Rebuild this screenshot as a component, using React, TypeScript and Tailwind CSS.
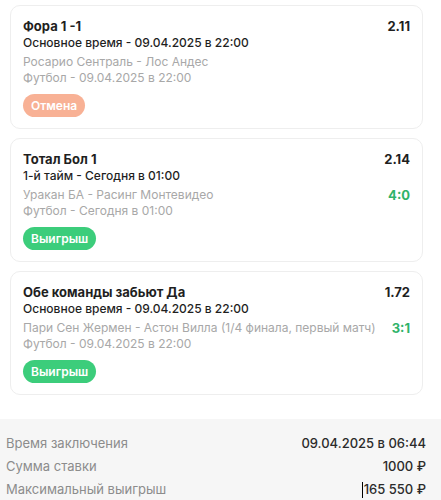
const bets = [
  {
    title: "Фора 1 -1",
    odds: "2.11",
    period: "Основное время - 09.04.2025 в 22:00",
    match: "Росарио Сентраль - Лос Андес",
    sport: "Футбол - 09.04.2025 в 22:00",
    score: "",
    status: "cancel",
  },
  {
    title: "Тотал Бол 1",
    odds: "2.14",
    period: "1-й тайм - Сегодня в 01:00",
    match: "Уракан БА - Расинг Монтевидео",
    sport: "Футбол - Сегодня в 01:00",
    score: "4:0",
    status: "win",
  },
  {
    title: "Обе команды забьют Да",
    odds: "1.72",
    period: "Основное время - 09.04.2025 в 22:00",
    match: "Пари Сен Жермен - Астон Вилла (1/4 финала, первый матч)",
    sport: "Футбол - 09.04.2025 в 22:00",
    score: "3:1",
    status: "win",
  },
];

const summary = [
  { label: "Время заключения", value: "09.04.2025 в 06:44" },
  { label: "Сумма ставки", value: "1000 ₽" },
  { label: "Максимальный выигрыш", value: "165 550 ₽", caret: true },
];

const App = () => {
  return (
    <div className="w-[441px] min-h-[500px] bg-white font-['Inter','Noto_Sans',sans-serif] text-[13px]">
      <div className="flex flex-col gap-[9px] pl-[10px] pr-[18px] pt-[5px]">
        {bets.map((bet, idx) => (
          <div
            key={idx}
            className="h-[124px] rounded-[10px] border border-[#eeeeee] px-[12px] pt-[12px] pb-[11px]"
          >
            <div className="flex items-start justify-between text-[13px] leading-[16px]">
              <div className="font-bold text-[#1f1f1f]">{bet.title}</div>
              <div className="font-bold text-[#1f1f1f]">{bet.odds}</div>
            </div>
            <div className="text-[12px] font-medium leading-[17px] text-[#1f1f1f]">{bet.period}</div>
            <div className="mt-[3px] flex items-center justify-between text-[12px] leading-[16px]">
              <div className="text-[#a8a8a8]">{bet.match}</div>
              {bet.score && (
                <div className="text-[13px] font-bold text-[#2fb36a]">{bet.score}</div>
              )}
            </div>
            <div className="text-[12px] leading-[16px] text-[#a8a8a8]">{bet.sport}</div>
            <div
              className={`mt-[8px] inline-flex h-[23px] items-center rounded-full px-[8px] text-[12px] font-semibold text-white ${
                bet.status === "win" ? "bg-[#3ccd7b]" : "bg-[#f8b195]"
              }`}
            >
              {bet.status === "win" ? "Выигрыш" : "Отмена"}
            </div>
          </div>
        ))}
      </div>

      <div className="mt-[24px] bg-[#f6f6f6] pl-[6px] pr-[15px] pt-[13px] pb-[2px]">
        {summary.map((row) => (
          <div key={row.label} className="flex h-[23px] items-center justify-between">
            <span className="text-[#8c8c8c]">{row.label}</span>
            <span className="flex items-center font-medium text-[#2b2b2b]">
              {row.caret && <span className="mr-px inline-block h-[16px] w-px bg-black" />}
              {row.value}
            </span>
          </div>
        ))}
      </div>
    </div>
  );
};

export default App;
